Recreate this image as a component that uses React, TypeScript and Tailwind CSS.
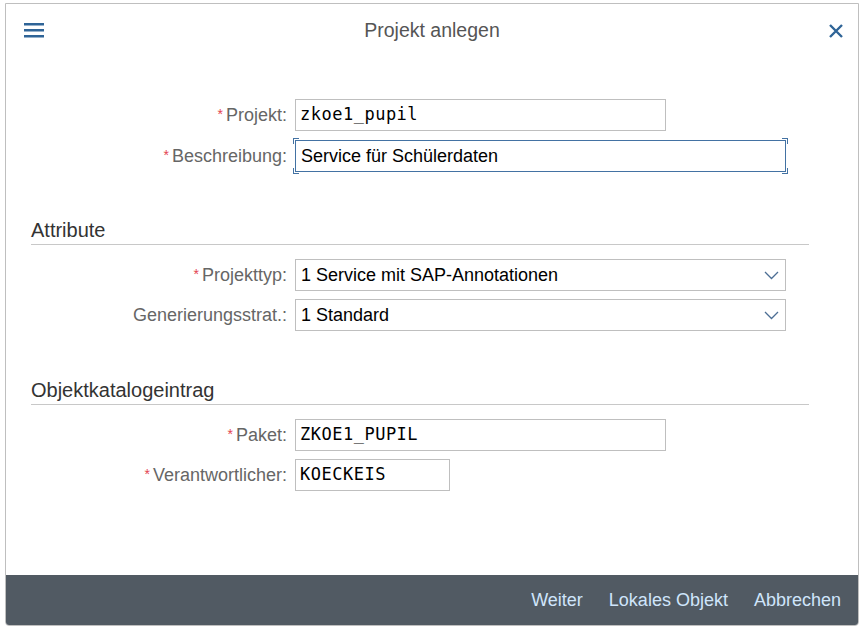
import React from 'react';

const Label = ({ text, req }: any) => (
  <div className="w-[256px] pr-0 text-right text-[18px] text-[#666] leading-[32px] whitespace-nowrap">
    {req && <span className="text-[#e34352] text-[14px] align-top relative top-[-1px] mr-[3px]">*</span>}
    {text}
  </div>
);

const TextField = ({ value, w, mono = true, focused = false }: any) => (
  <div
    className={`relative h-[32px] bg-white flex items-center ${w} ${
      focused ? 'border border-[#4372a3]' : 'border border-[#bfbfbf]'
    }`}
  >
    {focused && (
      <>
        <span className="absolute -top-[3px] -left-[3px] w-[6px] h-[6px] border-t border-l border-[#4372a3]" />
        <span className="absolute -top-[3px] -right-[3px] w-[6px] h-[6px] border-t border-r border-[#4372a3]" />
        <span className="absolute -bottom-[3px] -left-[3px] w-[6px] h-[6px] border-b border-l border-[#4372a3]" />
        <span className="absolute -bottom-[3px] -right-[3px] w-[6px] h-[6px] border-b border-r border-[#4372a3]" />
      </>
    )}
    {mono ? (
      <span className="pl-[4px] text-[17px] tracking-[0.5px] text-black font-['DejaVu_Sans_Mono',monospace]">{value}</span>
    ) : (
      <span className="pl-[5px] text-[18px] text-black">{value}</span>
    )}
  </div>
);

const SelectField = ({ value }: any) => (
  <div className="h-[32px] w-[491px] border border-[#bfbfbf] bg-white flex items-center justify-between pl-[5px] pr-[6px]">
    <span className="text-[18px] text-black">{value}</span>
    <svg width="15" height="9" viewBox="0 0 15 9" fill="none">
      <polyline points="1,1 7.5,7.5 14,1" stroke="#4c6e94" strokeWidth="1.3" />
    </svg>
  </div>
);

const Row = ({ label, req, children }: any) => (
  <div className="flex items-center gap-[8px]">
    <Label text={label} req={req} />
    {children}
  </div>
);

const Section = ({ title, mt }: any) => (
  <div className={`w-[778px] ${mt} border-b border-[#c8c8c8] pb-[2px] text-[20px] leading-[24px] text-[#333]`}>{title}</div>
);

export default function App() {
  return (
    <div className="min-h-screen bg-white pt-[3px] pl-[5px] font-['Liberation_Sans',Arial,sans-serif]">
      <div className="w-[854px] h-[623px] border border-[#bfbfbf] rounded-b-[4px] flex flex-col bg-white overflow-hidden">
        {/* Header */}
        <div className="relative h-[54px] flex items-center justify-center shrink-0">
          <svg className="absolute left-[18px] top-[19px]" width="20" height="15" viewBox="0 0 20 15">
            <rect x="0" y="0" width="20" height="2.5" fill="#2f6497" />
            <rect x="0" y="6" width="20" height="2.5" fill="#2f6497" />
            <rect x="0" y="12" width="20" height="2.5" fill="#2f6497" />
          </svg>
          <span className="text-[19.5px] text-[#555]">Projekt anlegen</span>
          <svg className="absolute right-[15px] top-[20px]" width="14" height="14" viewBox="0 0 14 14">
            <path d="M1 1 L13 13 M13 1 L1 13" stroke="#2f6497" strokeWidth="2.4" />
          </svg>
        </div>

        {/* Body */}
        <div className="flex-1 pl-[25px] pt-[41px]">
          <div className="flex flex-col gap-[9px]">
            <Row label="Projekt:" req>
              <TextField value="zkoe1_pupil" w="w-[371px]" />
            </Row>
            <Row label="Beschreibung:" req>
              <TextField value="Service für Schülerdaten" w="w-[491px]" mono={false} focused />
            </Row>
          </div>

          <Section title="Attribute" mt="mt-[46px]" />
          <div className="flex flex-col gap-[8px] mt-[14px]">
            <Row label="Projekttyp:" req>
              <SelectField value="1 Service mit SAP-Annotationen" />
            </Row>
            <Row label="Generierungsstrat.:">
              <SelectField value="1 Standard" />
            </Row>
          </div>

          <Section title="Objektkatalogeintrag" mt="mt-[47px]" />
          <div className="flex flex-col gap-[8px] mt-[14px]">
            <Row label="Paket:" req>
              <TextField value="ZKOE1_PUPIL" w="w-[371px]" />
            </Row>
            <Row label="Verantwortlicher:" req>
              <TextField value="KOECKEIS" w="w-[155px]" />
            </Row>
          </div>
        </div>

        {/* Footer */}
        <div className="h-[50px] shrink-0 bg-[#515a63] flex items-center justify-end gap-[26px] pr-[17px] text-[18px] text-[#cfe5fb]">
          <span>Weiter</span>
          <span>Lokales Objekt</span>
          <span>Abbrechen</span>
        </div>
      </div>
    </div>
  );
}
